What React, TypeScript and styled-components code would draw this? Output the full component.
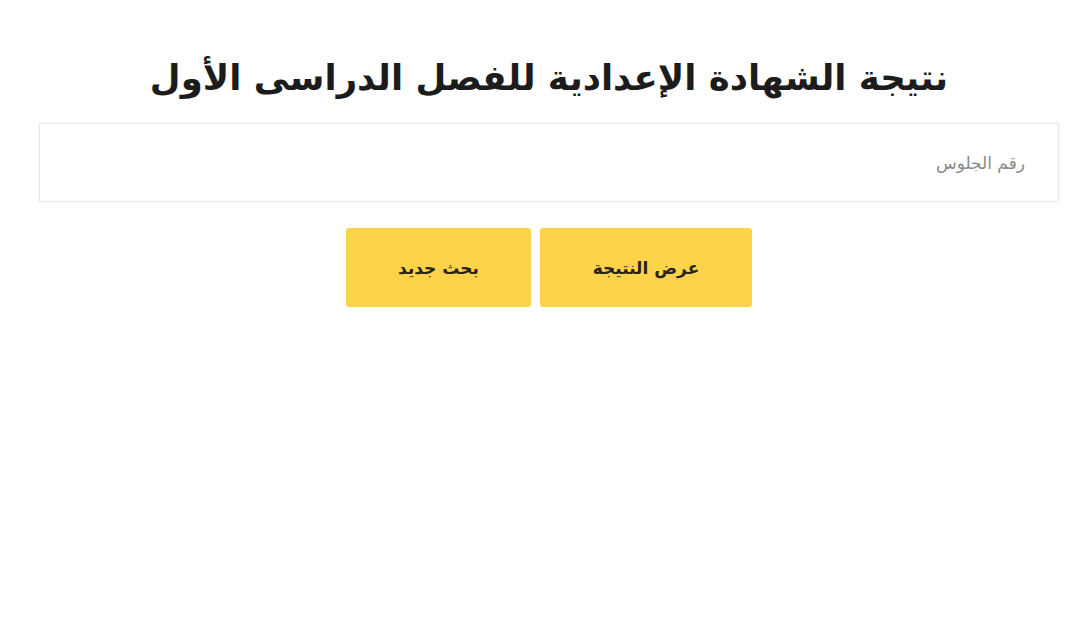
import React from "react";
import styled, { createGlobalStyle } from "styled-components";

const Global = createGlobalStyle`
  html, body { margin: 0; padding: 0; background: #ffffff; }
  body { font-family: "DejaVu Sans", "Noto Sans", sans-serif; }
`;

const Page = styled.div`
  direction: rtl;
  padding: 46px 32px 0 39px;
  display: flex;
  flex-direction: column;
  align-items: stretch;
`;

const Title = styled.h1`
  margin: 0;
  text-align: center;
  font-size: 35.5px;
  font-weight: 700;
  color: #1c1c1c;
  line-height: 64px;
`;

const Field = styled.input`
  margin-top: 13px;
  box-sizing: border-box;
  height: 79px;
  width: 100%;
  border: 1px solid #e8e8e8;
  box-shadow: 0 0 2px rgba(0, 0, 0, 0.06);
  background: #fff;
  padding: 0 33px;
  font-family: "DejaVu Sans", sans-serif;
  font-size: 17px;
  direction: rtl;
  outline: none;
  &::placeholder { color: #8a8a8a; }
`;

const Actions = styled.div`
  margin-top: 26px;
  display: flex;
  justify-content: center;
  gap: 9px;
`;

const Button = styled.button<{ $w: number }>`
  width: ${(p) => p.$w}px;
  height: 79px;
  border: none;
  border-radius: 3px;
  background: #fdd34a;
  color: #2a2416;
  font-family: "DejaVu Sans", sans-serif;
  font-weight: 700;
  font-size: 17px;
  cursor: pointer;
`;

export default function App() {
  return (
    <>
      <Global />
      <Page>
        <Title>نتيجة الشهادة الإعدادية للفصل الدراسى الأول</Title>
        <Field placeholder="رقم الجلوس" />
        <Actions>
          <Button $w={212}>عرض النتيجة</Button>
          <Button $w={185}>بحث جديد</Button>
        </Actions>
      </Page>
    </>
  );
}
